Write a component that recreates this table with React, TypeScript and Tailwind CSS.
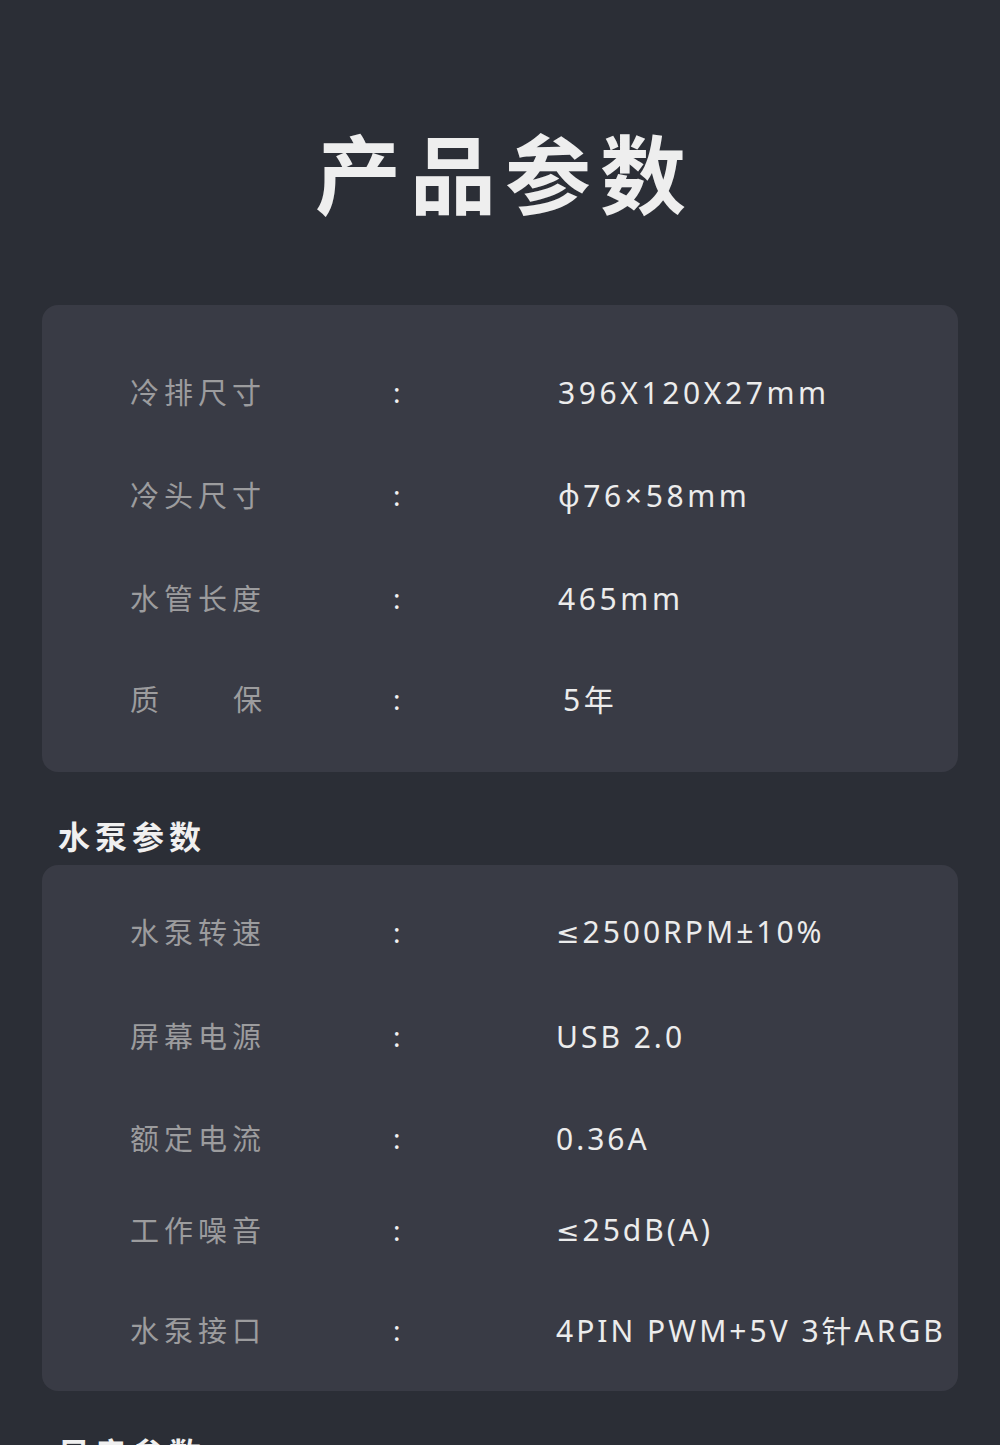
import React from 'react'

type Row = { label: string; value: React.ReactNode; mt: string; justify?: boolean; vpad?: string }

const le = <span className="font-['DejaVu_Sans',sans-serif] text-[28px]">≤</span>

const specs: Row[] = [
  { label: '冷排尺寸', value: '396X120X27mm', mt: 'mt-0' },
  { label: '冷头尺寸', value: 'ϕ76×58mm', mt: 'mt-[43px]' },
  { label: '水管长度', value: '465mm', mt: 'mt-[43px]' },
  { label: '质保', value: '5年', mt: 'mt-[41px]', justify: true, vpad: 'pl-[5px]' },
]

const pump: Row[] = [
  { label: '水泵转速', value: <>{le}2500RPM±10%</>, mt: 'mt-0' },
  { label: '屏幕电源', value: 'USB 2.0', mt: 'mt-[44px]' },
  { label: '额定电流', value: '0.36A', mt: 'mt-[42px]' },
  { label: '工作噪音', value: <>{le}25dB(A)</>, mt: 'mt-[32px]' },
  { label: '水泵接口', value: '4PIN PWM+5V 3针ARGB', mt: 'mt-[40px]' },
]

const cjk = "font-['Noto_Sans_CJK_SC',sans-serif]"
const latin = "font-['Noto_Sans','Noto_Sans_CJK_SC',sans-serif]"

function SpecRow({ row, valueX, track }: { row: Row; valueX: string; track: string }) {
  return (
    <div className={`flex h-[60px] items-center ${row.mt}`}>
      <div className="w-[267px] shrink-0 pl-[88px]">
        {row.justify ? (
          <div className={`flex w-[132px] justify-between text-[29px] text-[#9c9c9e] ${cjk}`}>
            {row.label.split('').map((c) => (
              <span key={c}>{c}</span>
            ))}
          </div>
        ) : (
          <span className={`whitespace-nowrap text-[29px] tracking-[5px] text-[#9c9c9e] ${cjk}`}>{row.label}</span>
        )}
      </div>
      <div className={`${valueX} shrink-0 text-[28px] text-[#f2f2f2] ${latin}`}>:</div>
      <div className={`whitespace-nowrap text-[30px] ${track} text-[#ececec] ${latin} ${row.vpad ?? ''}`}>{row.value}</div>
    </div>
  )
}

export default function App() {
  return (
    <div className="min-h-[1445px] w-[1000px] overflow-hidden bg-[#2b2e36] px-[42px]">
      <h1 className={`pl-[10px] pt-[128px] text-center text-[86px] font-bold leading-none tracking-[9px] text-[#eeeeee] ${cjk}`}>
        产品参数
      </h1>

      <div className="mt-[91px] rounded-[16px] bg-[#393b45] pb-[43px] pt-[57px]">
        {specs.map((r) => (
          <SpecRow key={r.label} row={r} valueX="w-[249px] pl-[84px]" track="tracking-[3.6px]" />
        ))}
      </div>

      <h2 className={`mt-[47px] pl-[16px] text-[32px] font-bold leading-none tracking-[5px] text-[#f0f0f0] ${cjk}`}>
        水泵参数
      </h2>

      <div className="mt-[14px] rounded-[16px] bg-[#393b45] pb-[31px] pt-[37px]">
        {pump.map((r) => (
          <SpecRow key={r.label} row={r} valueX="w-[247px] pl-[84px]" track="tracking-[3px]" />
        ))}
      </div>

      <h2 className={`mt-[45px] pl-[16px] text-[32px] font-bold leading-none tracking-[5px] text-[#f0f0f0] ${cjk}`}>
        风扇参数
      </h2>
    </div>
  )
}
